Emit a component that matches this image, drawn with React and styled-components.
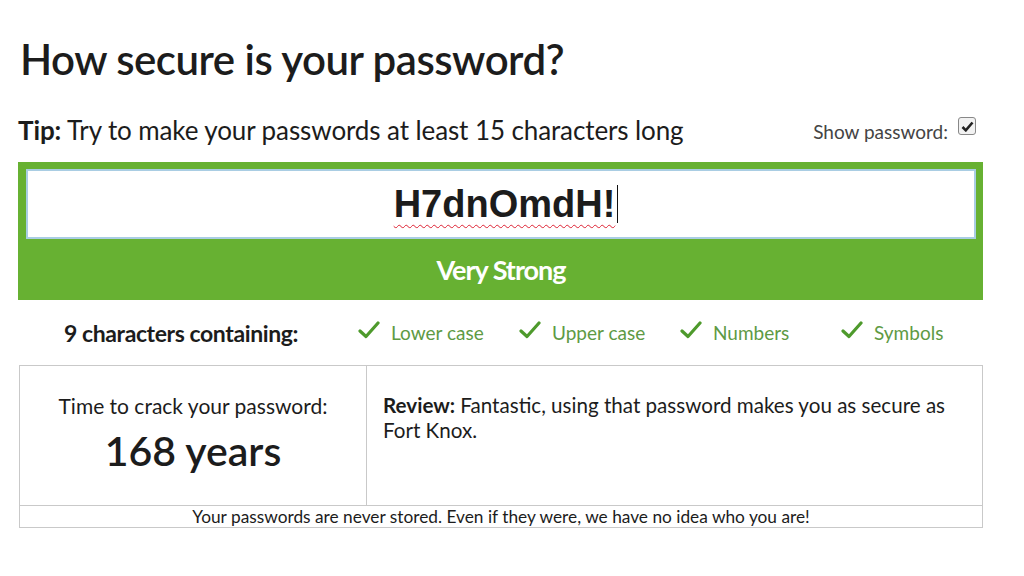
import { createGlobalStyle, styled } from "styled-components";

const GREEN = "#67b132";
const CHECK_GREEN = "#4e9a2c";
const LINE = "#c9c9c9";

const checks = ["Lower case", "Upper case", "Numbers", "Symbols"];

export default function App () {
  return (
    <>
      <GlobalStyle />
      <Page>
        <Title>How secure is your password?</Title>
        <TipRow>
          <Tip><b>Tip:</b> Try to make your passwords at least 15 characters long</Tip>
          <ShowToggle>
            Show password:
            <CheckBox aria-checked="true" role="checkbox">
              <svg width="13" height="11" viewBox="0 0 13 11">
                <path d="M1.5 6 L4.8 9.3 L11.5 1.5" fill="none" stroke="#222" strokeWidth="2.6" />
              </svg>
            </CheckBox>
          </ShowToggle>
        </TipRow>
        <Meter>
          <PasswordField role="textbox">
            <Typed>H7dnOmdH!</Typed>
            <Caret />
          </PasswordField>
          <Strength>Very Strong</Strength>
        </Meter>
        <Summary>
          <Count>9 characters containing:</Count>
          {checks.map((label) => (
            <CheckItem key={label}>
              <svg width="22" height="18" viewBox="0 0 22 18">
                <path d="M2 10 L8 15.5 L20 2" fill="none" stroke={CHECK_GREEN} strokeWidth="3.2" strokeLinecap="round" strokeLinejoin="round" />
              </svg>
              {label}
            </CheckItem>
          ))}
        </Summary>
        <Results>
          <CrackCell>
            <span>Time to crack your password:</span>
            <Years>168 years</Years>
          </CrackCell>
          <ReviewCell>
            <b>Review:</b> Fantastic, using that password makes you as secure as Fort Knox.
          </ReviewCell>
          <Footer>Your passwords are never stored. Even if they were, we have no idea who you are!</Footer>
        </Results>
      </Page>
    </>
  );
}

const GlobalStyle = createGlobalStyle`
  body {
    background: #fff;
    color: #1c1c1c;
    font-family: Lato, "Open Sans", sans-serif;
    margin: 0;
  }
`;

const CheckBox = styled.span`
  align-items: center;
  background: #f2f2f2;
  border: 1px solid #888;
  border-radius: 3px;
  display: inline-flex;
  height: 16px;
  justify-content: center;
  margin-bottom: 11px;
  width: 16px;
`;

const CheckItem = styled.div`
  align-items: center;
  color: #5e9a44;
  display: flex;
  font-size: 19px;
  gap: 11px;
  width: 161px;

  & svg {
    margin-top: -5px;
  }
`;

const Count = styled.div`
  font-size: 23px;
  font-weight: 700;
  letter-spacing: -0.4px;
  margin-right: 60px;
  text-align: right;
  width: 278px;
`;

const Caret = styled.span`
  background: #111;
  display: inline-block;
  height: 38px;
  margin-left: 2px;
  width: 1px;
`;

const CrackCell = styled.div`
  align-items: center;
  border-right: 1px solid ${LINE};
  display: flex;
  flex-direction: column;
  font-size: 21px;
  gap: 8px;
  padding-top: 27px;
`;

const Footer = styled.div`
  border-top: 1px solid ${LINE};
  font-size: 17.3px;
  grid-column: 1 / 3;
  line-height: 21px;
  text-align: center;
`;

const Meter = styled.div`
  background: ${GREEN};
  display: flex;
  flex-direction: column;
  padding: 7px 7px 0 8px;
  width: 950px;
`;

const Page = styled.main`
  display: flex;
  flex-direction: column;
  padding: 0 18px;
`;

const PasswordField = styled.div`
  align-items: center;
  background: #fff;
  border: 2px solid #a9cde3;
  display: flex;
  font-family: "Liberation Sans", Arial, sans-serif;
  font-size: 38px;
  font-weight: 700;
  height: 66px;
  justify-content: center;
  padding-left: 10px;
`;

const Results = styled.div`
  border: 1px solid ${LINE};
  display: grid;
  grid-template-columns: 347px 1fr;
  grid-template-rows: 139px auto;
  margin-left: 1px;
  width: 962px;
`;

const ReviewCell = styled.div`
  font-size: 20.6px;
  line-height: 25px;
  padding: 27px 12px 0 16px;
`;

const ShowToggle = styled.label`
  align-items: center;
  color: #444;
  display: flex;
  font-size: 19px;
  gap: 10px;
  margin-right: 7px;
`;

const Strength = styled.div`
  color: #fff;
  font-size: 27px;
  font-weight: 700;
  height: 61px;
  letter-spacing: -1px;
  line-height: 62px;
  text-align: center;
`;

const Summary = styled.div`
  align-items: center;
  display: flex;
  height: 65px;
  padding-left: 2px;
`;

const Tip = styled.div`
  font-size: 26px;
  letter-spacing: -0.1px;
`;

const TipRow = styled.div`
  align-items: flex-end;
  display: flex;
  justify-content: space-between;
  margin-bottom: 16px;
  width: 965px;
`;

const Title = styled.h1`
  font-size: 42px;
  font-weight: 600;
  letter-spacing: -0.5px;
  margin: 34px 0 30px 2px;
`;

const Typed = styled.span`
  text-decoration: underline wavy #d23;
  text-decoration-thickness: 1px;
  text-underline-offset: 7px;
`;

const Years = styled.span`
  font-size: 41px;
  font-weight: 600;
`;
